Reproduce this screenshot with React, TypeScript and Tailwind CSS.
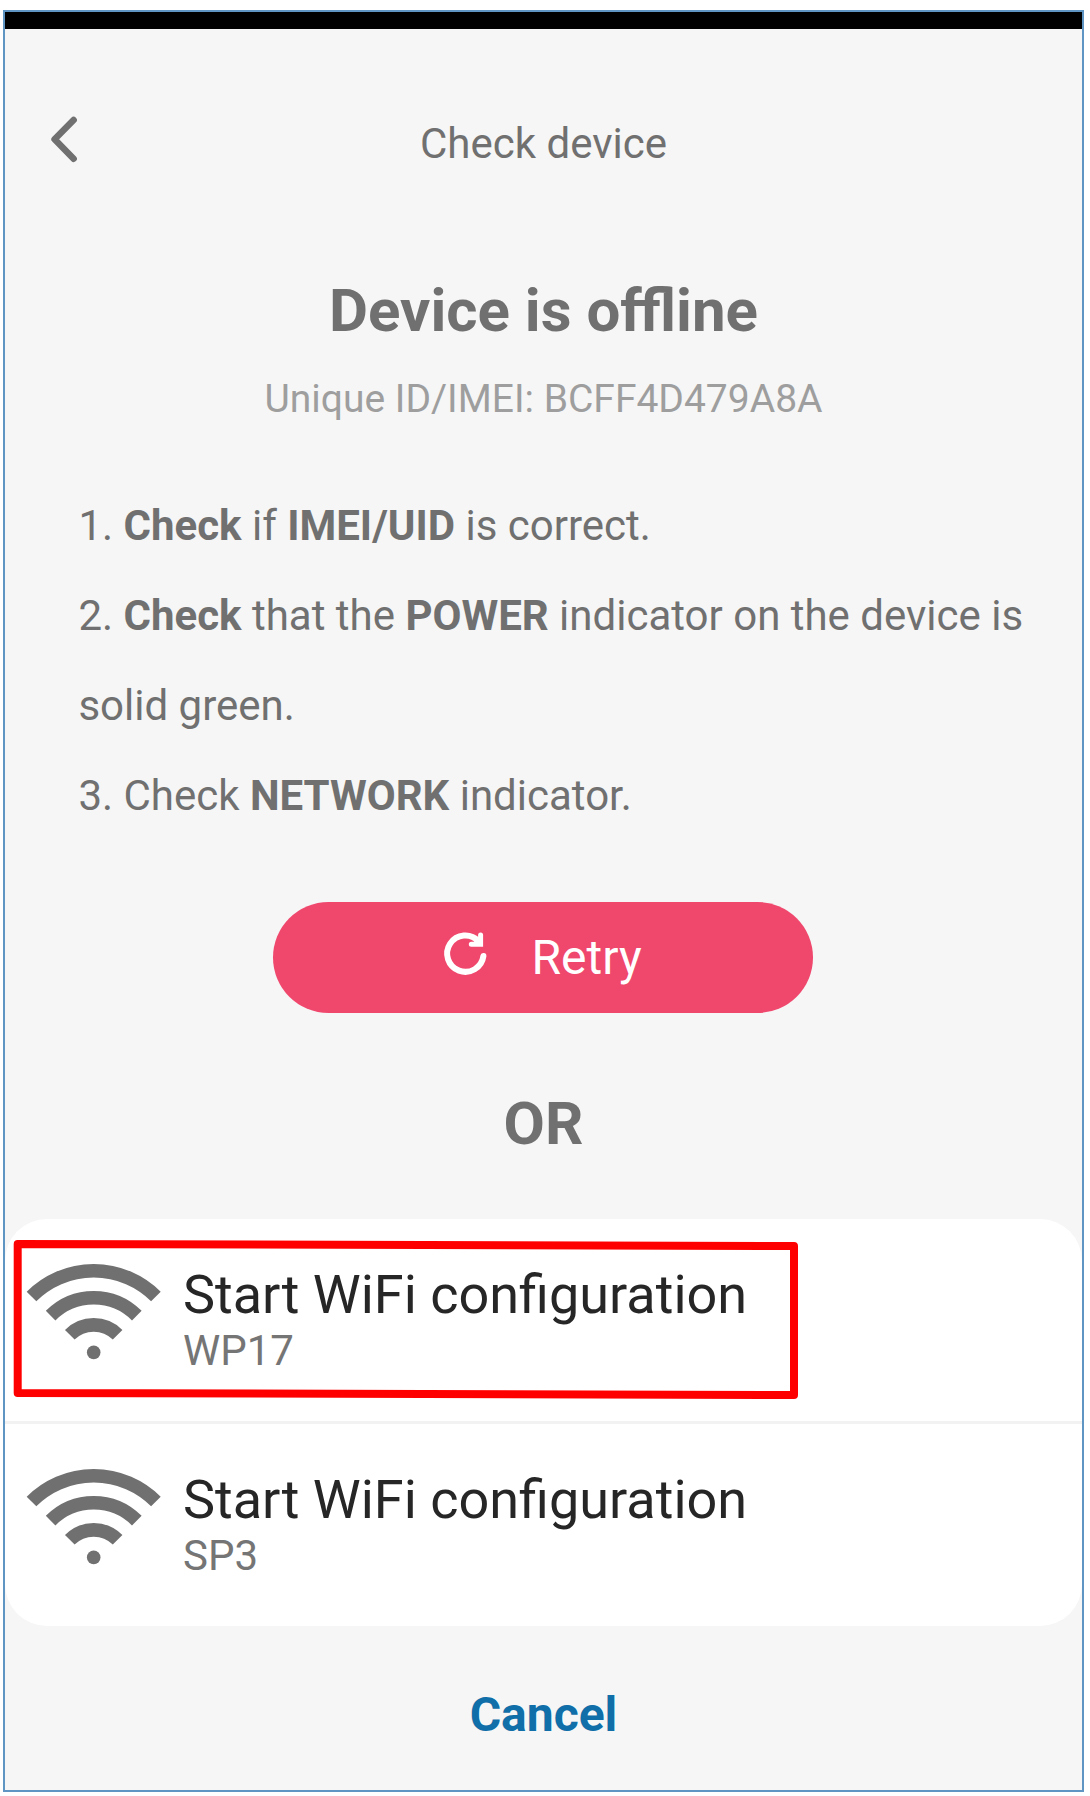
import React from "react";

function WifiIcon() {
  return (
    <svg className="ml-[21px] h-[100px] w-[136px] shrink-0" viewBox="26 1263 136 100" fill="none" stroke="#707070" strokeWidth="13.6">
      <path d="M31.5 1296.5 A88 88 0 0 1 155.9 1296.5" />
      <path d="M50.6 1315.6 A60.9 60.9 0 0 1 136.8 1315.6" />
      <path d="M69.8 1334.8 A33.8 33.8 0 0 1 117.6 1334.8" />
      <circle cx="93.7" cy="1352.4" r="6.8" fill="#707070" stroke="none" />
    </svg>
  );
}

function ConfigRow({ name }: { name: string }) {
  return (
    <button className="flex h-[202px] w-full items-start pt-[44px] text-left">
      <WifiIcon />
      <span className="ml-[21px] flex flex-col whitespace-nowrap">
        <span className="h-[63px] text-[54px] leading-[63px] text-[#262626]">Start WiFi configuration</span>
        <span className="h-[49px] text-[42px] leading-[49px] text-[#757575]">{name}</span>
      </span>
    </button>
  );
}

export default function App() {
  return (
    <div className="h-[1796px] w-[1090px] bg-white pl-[3px] pt-[10px]">
      <main className="flex h-[1782px] w-[1081px] flex-col border-2 border-[#5f95c3] bg-[#f6f6f6] font-['Roboto',sans-serif] text-[#707070]">
        <div className="h-[17px] shrink-0 bg-black" />

        <header className="mt-[80px] grid h-[70px] shrink-0 grid-cols-[100px_1fr_100px] items-center">
          <button aria-label="Back" className="ml-[44px] h-[50px] w-[30px]">
            <svg className="h-[50px] w-[30px] overflow-visible" viewBox="49 119 30 50" fill="none" stroke="#707070" strokeWidth="6.6" strokeLinecap="round" strokeLinejoin="round">
              <path d="M73.6 120 L54.6 139.3 L73.6 158.7" />
            </svg>
          </button>
          <h1 className="text-center text-[42px] leading-[70px]">Check device</h1>
        </header>

        <h2 className="mt-[97px] h-[70px] shrink-0 text-center text-[60px] font-bold leading-[70px]">Device is offline</h2>
        <p className="mt-[28px] h-[50px] shrink-0 text-center text-[39px] leading-[50px] text-[#9e9e9e]">Unique ID/IMEI: BCFF4D479A8A</p>

        <div className="ml-[73.4px] mt-[57px] h-[360px] shrink-0 whitespace-nowrap text-[42px] leading-[90px]">
          <p>1. <b>Check</b> if <b>IMEI/UID</b> is correct.</p>
          <p>2. <b>Check</b> that the <b>POWER</b> indicator on the device is<br />solid green.</p>
          <p>3. Check <b>NETWORK</b> indicator.</p>
        </div>

        <button className="mr-px mt-[61px] flex h-[111px] w-[540px] shrink-0 items-center self-center rounded-full bg-[#f0476d] text-white">
          <svg className="ml-[168px] h-[50px] w-[48px] overflow-visible" viewBox="441 932.5 48 50" fill="none" stroke="white" strokeWidth="6" strokeLinecap="round" strokeLinejoin="round">
            <path d="M483.4 955.5 A18.2 18.2 0 1 1 478.5 940.5" />
            <path d="M480.6 934.5 V943.8 H471.3 Z" fill="white" stroke="none" />
            <path d="M480.6 934.5 V943.8 H471.3" strokeWidth="5" strokeLinejoin="miter" />
          </svg>
          <span className="ml-[42.5px] text-[48px] leading-[60px]">Retry</span>
        </button>

        <div className="mt-[76px] h-[70px] shrink-0 text-center text-[60px] font-bold leading-[70px]">OR</div>

        <section className="relative mt-[60px] h-[407px] shrink-0 rounded-[42px] bg-white">
          <ConfigRow name="WP17" />
          <div className="h-[3px] bg-[#f2f2f2]" />
          <ConfigRow name="SP3" />
          <svg className="pointer-events-none absolute left-0 top-[11px] h-[180px] w-[810px]" viewBox="5 1230 810 180" fill="none" stroke="#ff0000" strokeWidth="8" strokeLinejoin="round">
            <path d="M17.7 1244 L794 1246 V1395 L17.7 1393 Z" />
          </svg>
        </section>

        <button className="mt-[59px] h-[60px] shrink-0 self-center text-[48px] font-bold leading-[60px] text-[#106ea8]">Cancel</button>
      </main>
    </div>
  );
}
